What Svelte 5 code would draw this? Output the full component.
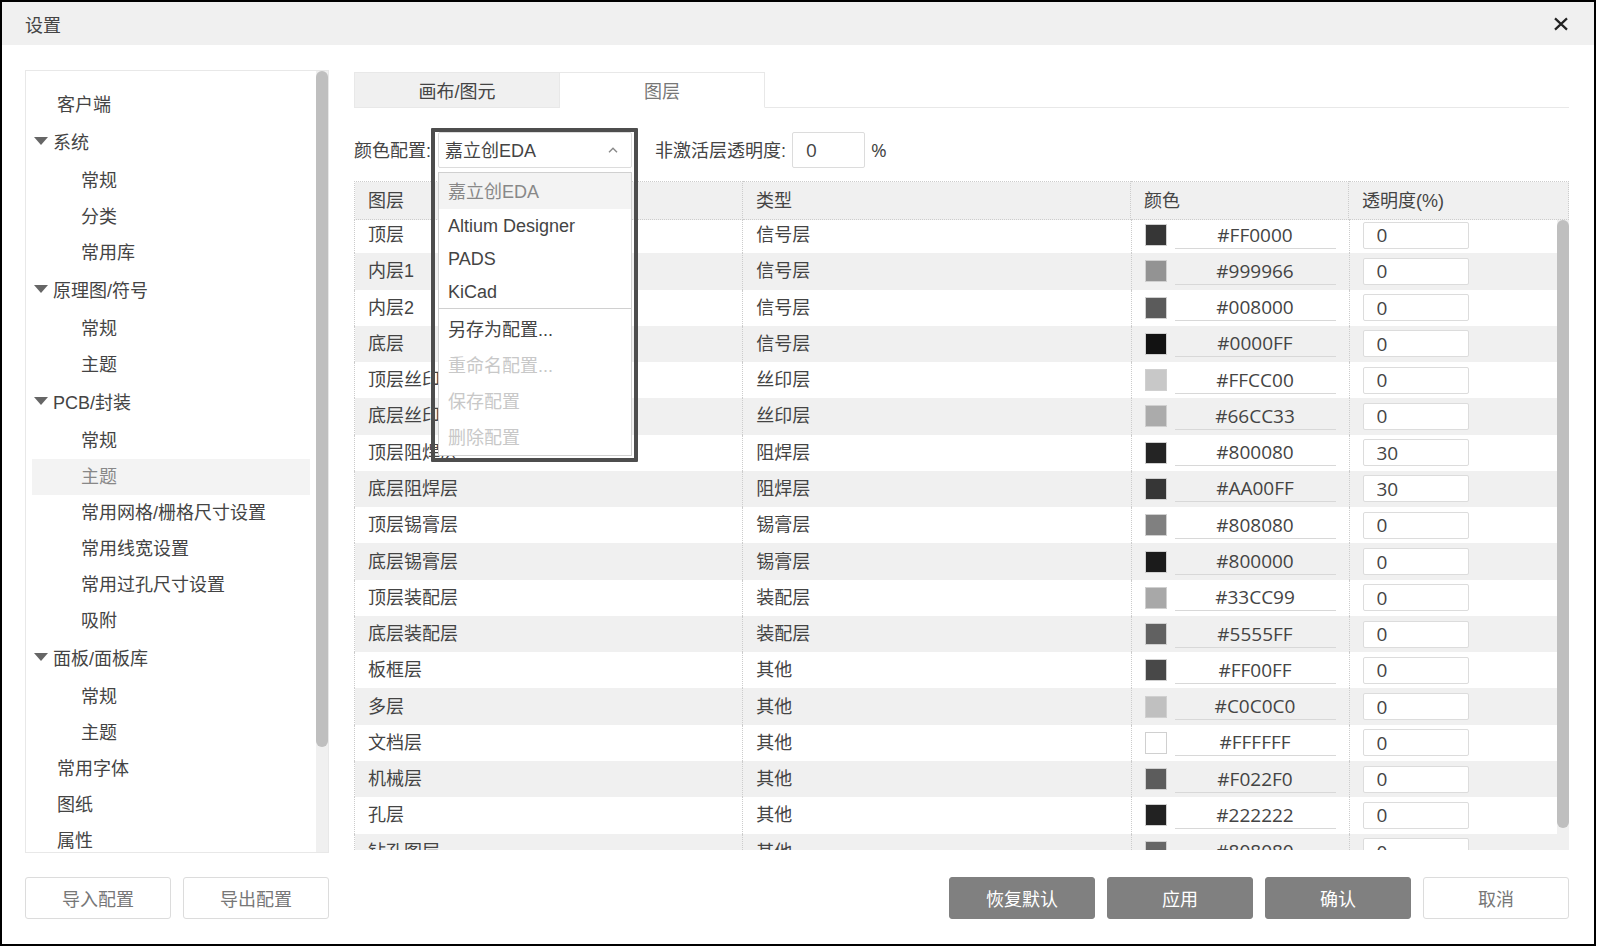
<script lang="ts">
	type NavItem = {
		label: string;
		level: 'top' | 'group' | 'child';
		active?: boolean;
	};

	type Layer = {
		name: string;
		type: string;
		color: string;
		shade: string;
		opacity: string;
	};

	const navItems: NavItem[] = [
		{ label: '客户端', level: 'top' },
		{ label: '系统', level: 'group' },
		{ label: '常规', level: 'child' },
		{ label: '分类', level: 'child' },
		{ label: '常用库', level: 'child' },
		{ label: '原理图/符号', level: 'group' },
		{ label: '常规', level: 'child' },
		{ label: '主题', level: 'child' },
		{ label: 'PCB/封装', level: 'group' },
		{ label: '常规', level: 'child' },
		{ label: '主题', level: 'child', active: true },
		{ label: '常用网格/栅格尺寸设置', level: 'child' },
		{ label: '常用线宽设置', level: 'child' },
		{ label: '常用过孔尺寸设置', level: 'child' },
		{ label: '吸附', level: 'child' },
		{ label: '面板/面板库', level: 'group' },
		{ label: '常规', level: 'child' },
		{ label: '主题', level: 'child' },
		{ label: '常用字体', level: 'top' },
		{ label: '图纸', level: 'top' },
		{ label: '属性', level: 'top' }
	];

	const schemes = ['嘉立创EDA', 'Altium Designer', 'PADS', 'KiCad'];
	const actions = [
		{ label: '另存为配置...', disabled: false },
		{ label: '重命名配置...', disabled: true },
		{ label: '保存配置', disabled: true },
		{ label: '删除配置', disabled: true }
	];

	let layers: Layer[] = $state([
		{ name: '顶层', type: '信号层', color: '#FF0000', shade: '#363636', opacity: '0' },
		{ name: '内层1', type: '信号层', color: '#999966', shade: '#939393', opacity: '0' },
		{ name: '内层2', type: '信号层', color: '#008000', shade: '#5b5b5b', opacity: '0' },
		{ name: '底层', type: '信号层', color: '#0000FF', shade: '#121212', opacity: '0' },
		{ name: '顶层丝印层', type: '丝印层', color: '#FFCC00', shade: '#c8c8c8', opacity: '0' },
		{ name: '底层丝印层', type: '丝印层', color: '#66CC33', shade: '#ababab', opacity: '0' },
		{ name: '顶层阻焊层', type: '阻焊层', color: '#800080', shade: '#242424', opacity: '30' },
		{ name: '底层阻焊层', type: '阻焊层', color: '#AA00FF', shade: '#363636', opacity: '30' },
		{ name: '顶层锡膏层', type: '锡膏层', color: '#808080', shade: '#808080', opacity: '0' },
		{ name: '底层锡膏层', type: '锡膏层', color: '#800000', shade: '#1b1b1b', opacity: '0' },
		{ name: '顶层装配层', type: '装配层', color: '#33CC99', shade: '#a8a8a8', opacity: '0' },
		{ name: '底层装配层', type: '装配层', color: '#5555FF', shade: '#616161', opacity: '0' },
		{ name: '板框层', type: '其他', color: '#FF00FF', shade: '#484848', opacity: '0' },
		{ name: '多层', type: '其他', color: '#C0C0C0', shade: '#c0c0c0', opacity: '0' },
		{ name: '文档层', type: '其他', color: '#FFFFFF', shade: '#ffffff', opacity: '0' },
		{ name: '机械层', type: '其他', color: '#F022F0', shade: '#5c5c5c', opacity: '0' },
		{ name: '孔层', type: '其他', color: '#222222', shade: '#222222', opacity: '0' },
		{ name: '钻孔图层', type: '其他', color: '#808080', shade: '#666666', opacity: '0' }
	]);

	let scheme = $state('嘉立创EDA');
	let inactiveOpacity = $state('0');
	let menuOpen = $state(true);
</script>

{#snippet columns()}
	<colgroup>
		<col />
		<col />
		<col class="col-color" />
		<col class="col-opacity" />
	</colgroup>
{/snippet}

<div class="dialog">
	<header class="titlebar">
		<h1>设置</h1>
		<button class="close" type="button" aria-label="关闭">
			<svg viewBox="0 0 14 14" width="14" height="14" aria-hidden="true">
				<path d="M1 1.4 L13 12.6 M13 1.4 L1 12.6" fill="none" stroke="#222" stroke-width="2.2" />
			</svg>
		</button>
	</header>

	<div class="body">
		<nav class="sidebar">
			<ul>
				{#each navItems as item}
					<li>
						<button type="button" class="nav {item.level}" class:active={item.active}>
							{#if item.level === 'group'}
								<svg viewBox="0 0 14 8" width="14" height="8" aria-hidden="true">
									<path d="M0 0 H14 L7 8 Z" fill="#666" />
								</svg>
							{/if}
							{item.label}
						</button>
					</li>
				{/each}
			</ul>
			<div class="track"><div class="thumb nav-thumb"></div></div>
		</nav>

		<main>
			<div class="tabs" role="tablist">
				<button type="button" role="tab" aria-selected="false">画布/图元</button>
				<button type="button" role="tab" aria-selected="true" class="current">图层</button>
			</div>

			<div class="options">
				<label for="scheme">颜色配置:</label>
				<div class="picker">
					<select id="scheme" bind:value={scheme}>
						{#each schemes as name}
							<option>{name}</option>
						{/each}
					</select>
					<svg class="caret" viewBox="0 0 10 6" width="10" height="6" aria-hidden="true">
						<path d="M1 5.2 L5 1.2 L9 5.2" fill="none" stroke="#888" stroke-width="1.4" />
					</svg>
					{#if menuOpen}
						<div class="frame"></div>
						<ul class="menu">
							{#each schemes as name, i}
								<li>
									<button
										type="button"
										class:tall={i === 0}
										class:chosen={name === scheme}
										onclick={() => (scheme = name)}
									>
										{name}
									</button>
								</li>
							{/each}
							<li class="divider"></li>
							{#each actions as action}
								<li>
									<button type="button" class="tall" disabled={action.disabled}>{action.label}</button>
								</li>
							{/each}
						</ul>
					{/if}
				</div>
				<label for="inactive" class="inactive-label">非激活层透明度:</label>
				<input id="inactive" type="text" bind:value={inactiveOpacity} />
				<span class="unit">%</span>
			</div>

			<div class="layers">
				<table class="head">
					{@render columns()}
					<thead>
						<tr>
							<th>图层</th>
							<th>类型</th>
							<th>颜色</th>
							<th>透明度(%)</th>
						</tr>
					</thead>
				</table>
				<div class="rows">
					<table class="data">
						{@render columns()}
						<tbody>
							{#each layers as layer}
								<tr>
									<td>{layer.name}</td>
									<td>{layer.type}</td>
									<td>
										<div class="color">
											<button
												type="button"
												class="swatch"
												aria-label="{layer.name}颜色"
												style="background: {layer.shade}"
											></button>
											<input type="text" aria-label="{layer.name}色值" bind:value={layer.color} />
										</div>
									</td>
									<td>
										<input
											class="opacity"
											type="text"
											aria-label="{layer.name}透明度"
											bind:value={layer.opacity}
										/>
									</td>
								</tr>
							{/each}
						</tbody>
					</table>
					<div class="track"><div class="thumb rows-thumb"></div></div>
				</div>
			</div>
		</main>
	</div>

	<footer class="footer">
		<button type="button">导入配置</button>
		<button type="button">导出配置</button>
		<span class="spacer"></span>
		<button type="button" class="primary">恢复默认</button>
		<button type="button" class="primary">应用</button>
		<button type="button" class="primary">确认</button>
		<button type="button">取消</button>
	</footer>
</div>

<style>
	:global(body) {
		background: #fff;
	}

	.dialog {
		--text: #444;
		--grey: #f0f0f0;
		--line: #e8e8e8;
		--field: #dcdcdc;
		box-sizing: border-box;
		display: flex;
		flex-direction: column;
		height: calc(100vh - 1px);
		margin-right: 1px;
		border: 2px solid #000;
		background: #fff;
		color: var(--text);
		font-family: 'Liberation Sans', 'Noto Sans CJK SC', sans-serif;
		font-size: 18px;
		line-height: 26px;
	}

	button,
	input,
	select {
		box-sizing: border-box;
		margin: 0;
		padding: 0;
		border: 0;
		border-radius: 0;
		background: none;
		color: inherit;
		font: inherit;
	}

	button {
		cursor: pointer;
	}

	ul {
		margin: 0;
		padding: 0;
		list-style: none;
	}

	.titlebar {
		display: flex;
		align-items: center;
		justify-content: space-between;
		height: 43px;
		padding: 0 25px 0 23px;
		background: var(--grey);
	}

	h1 {
		margin: 0;
		padding-top: 4px;
		font-size: 18px;
		font-weight: 400;
	}

	.close {
		display: flex;
		padding: 1px;
	}

	.body {
		display: flex;
		flex: 1;
		gap: 25px;
		min-height: 0;
		padding: 25px 25px 24px 23px;
	}

	.sidebar {
		position: relative;
		box-sizing: border-box;
		flex: 0 0 304px;
		overflow: hidden;
		border: 1px solid var(--line);
	}

	.sidebar ul {
		padding: 16px 18px 0 6px;
	}

	.nav {
		display: flex;
		align-items: center;
		width: 100%;
		height: 36px;
		text-align: left;
	}

	.nav.top {
		padding-left: 25px;
	}

	.nav.group {
		gap: 5px;
		height: 40px;
		padding-left: 2px;
	}

	.nav.group svg {
		margin-bottom: 4px;
	}

	.nav.child {
		padding-left: 49px;
	}

	.nav.active {
		background: #f3f3f3;
		color: #888;
	}

	.track {
		position: absolute;
		top: 0;
		right: 0;
		bottom: 0;
		width: 12px;
		background: var(--grey);
	}

	.thumb {
		border-radius: 6px;
		background: #bfbfbf;
	}

	.nav-thumb {
		height: 86.5%;
	}

	.rows-thumb {
		height: 96.5%;
	}

	main {
		display: flex;
		flex: 1;
		flex-direction: column;
		min-width: 0;
		padding: 2px 0 3px;
	}

	.tabs {
		display: flex;
		box-shadow: inset 0 -1px var(--line);
	}

	.tabs button {
		width: 206px;
		height: 36px;
		padding-top: 3px;
		border: 1px solid var(--line);
		background: var(--grey);
	}

	.tabs .current {
		width: 205px;
		border-bottom-color: #fff;
		border-left: 0;
		background: #fff;
		color: #777;
	}

	.options {
		display: flex;
		align-items: center;
		padding: 24px 0 13px;
	}

	.options label {
		flex: none;
		padding-top: 2px;
	}

	.picker {
		position: relative;
		flex: 0 0 194px;
		margin-left: 7px;
	}

	.picker select {
		display: block;
		width: 100%;
		height: 36px;
		padding: 2px 24px 0 6px;
		border: 1px solid var(--field);
		border-radius: 2px;
		background: #fff;
		appearance: none;
	}

	.caret {
		position: absolute;
		top: 15px;
		right: 14px;
	}

	.frame {
		position: absolute;
		z-index: 1;
		top: -4px;
		right: -6px;
		left: -7px;
		height: 326px;
		border: 4px solid #4d4d4d;
		border-radius: 1px;
		pointer-events: none;
	}

	.menu {
		position: absolute;
		z-index: 2;
		top: 40px;
		right: 0;
		left: 0;
		border: 1px solid #d0d0d0;
		background: #fff;
	}

	.menu button {
		display: block;
		width: 100%;
		height: 33px;
		padding-left: 9px;
		text-align: left;
	}

	.menu .tall {
		height: 36px;
		padding-top: 2px;
	}

	.menu .chosen {
		background: #f3f3f3;
		color: #888;
	}

	.menu button:disabled {
		color: #c8c8c8;
	}

	.divider {
		height: 1px;
		margin-bottom: 2px;
		background: #d0d0d0;
	}

	.inactive-label {
		margin-left: 23px;
	}

	.options input {
		width: 73px;
		height: 36px;
		margin-left: 6px;
		padding-left: 13px;
		border: 1px solid var(--field);
		border-radius: 2px;
		background: #fff;
	}

	.unit {
		margin-left: 6px;
	}

	.options input,
	.unit,
	.data input {
		font-family: 'Open Sans', 'Noto Sans CJK SC', sans-serif;
		font-size: 19px;
	}

	.layers {
		display: flex;
		flex: 1;
		flex-direction: column;
		min-height: 0;
	}

	table {
		width: 100%;
		border-collapse: collapse;
		table-layout: fixed;
	}

	.col-color {
		width: 218px;
	}

	.col-opacity {
		width: 220px;
	}

	.head th {
		height: 37px;
		padding: 0 0 0 13px;
		border: 1px dotted #ccc;
		background: var(--grey);
		font-weight: 400;
		text-align: left;
	}

	.rows {
		position: relative;
		flex: 1;
		min-height: 0;
		overflow: hidden;
	}

	/* scrolled a little, so the first row tucks under the header */
	.data {
		height: 653px;
		margin-top: -3px;
	}

	.data td {
		padding: 0 0 0 13px;
		border-left: 1px dotted #ccc;
	}

	.data tr:nth-child(even) {
		background: var(--grey);
	}

	.color {
		display: flex;
		gap: 8px;
		align-items: center;
	}

	.swatch {
		flex: none;
		width: 22px;
		height: 22px;
		border: 1px solid #d0d0d0;
	}

	.color input {
		width: 161px;
		height: 27px;
		border-bottom: 1px solid #d8d8d8;
		text-align: center;
	}

	.opacity {
		display: block;
		width: 106px;
		height: 27px;
		padding-left: 13px;
		border: 1px solid var(--field);
		border-radius: 2px;
		background: #fff;
	}

	.footer {
		display: flex;
		gap: 12px;
		padding: 0 25px 25px 23px;
	}

	.footer button {
		width: 146px;
		height: 42px;
		padding-top: 3px;
		border: 1px solid var(--field);
		border-radius: 3px;
		color: #777;
	}

	.footer .primary {
		border-color: #808080;
		background: #808080;
		color: #fff;
	}

	.spacer {
		flex: 1;
		margin-right: -12px;
	}
</style>
